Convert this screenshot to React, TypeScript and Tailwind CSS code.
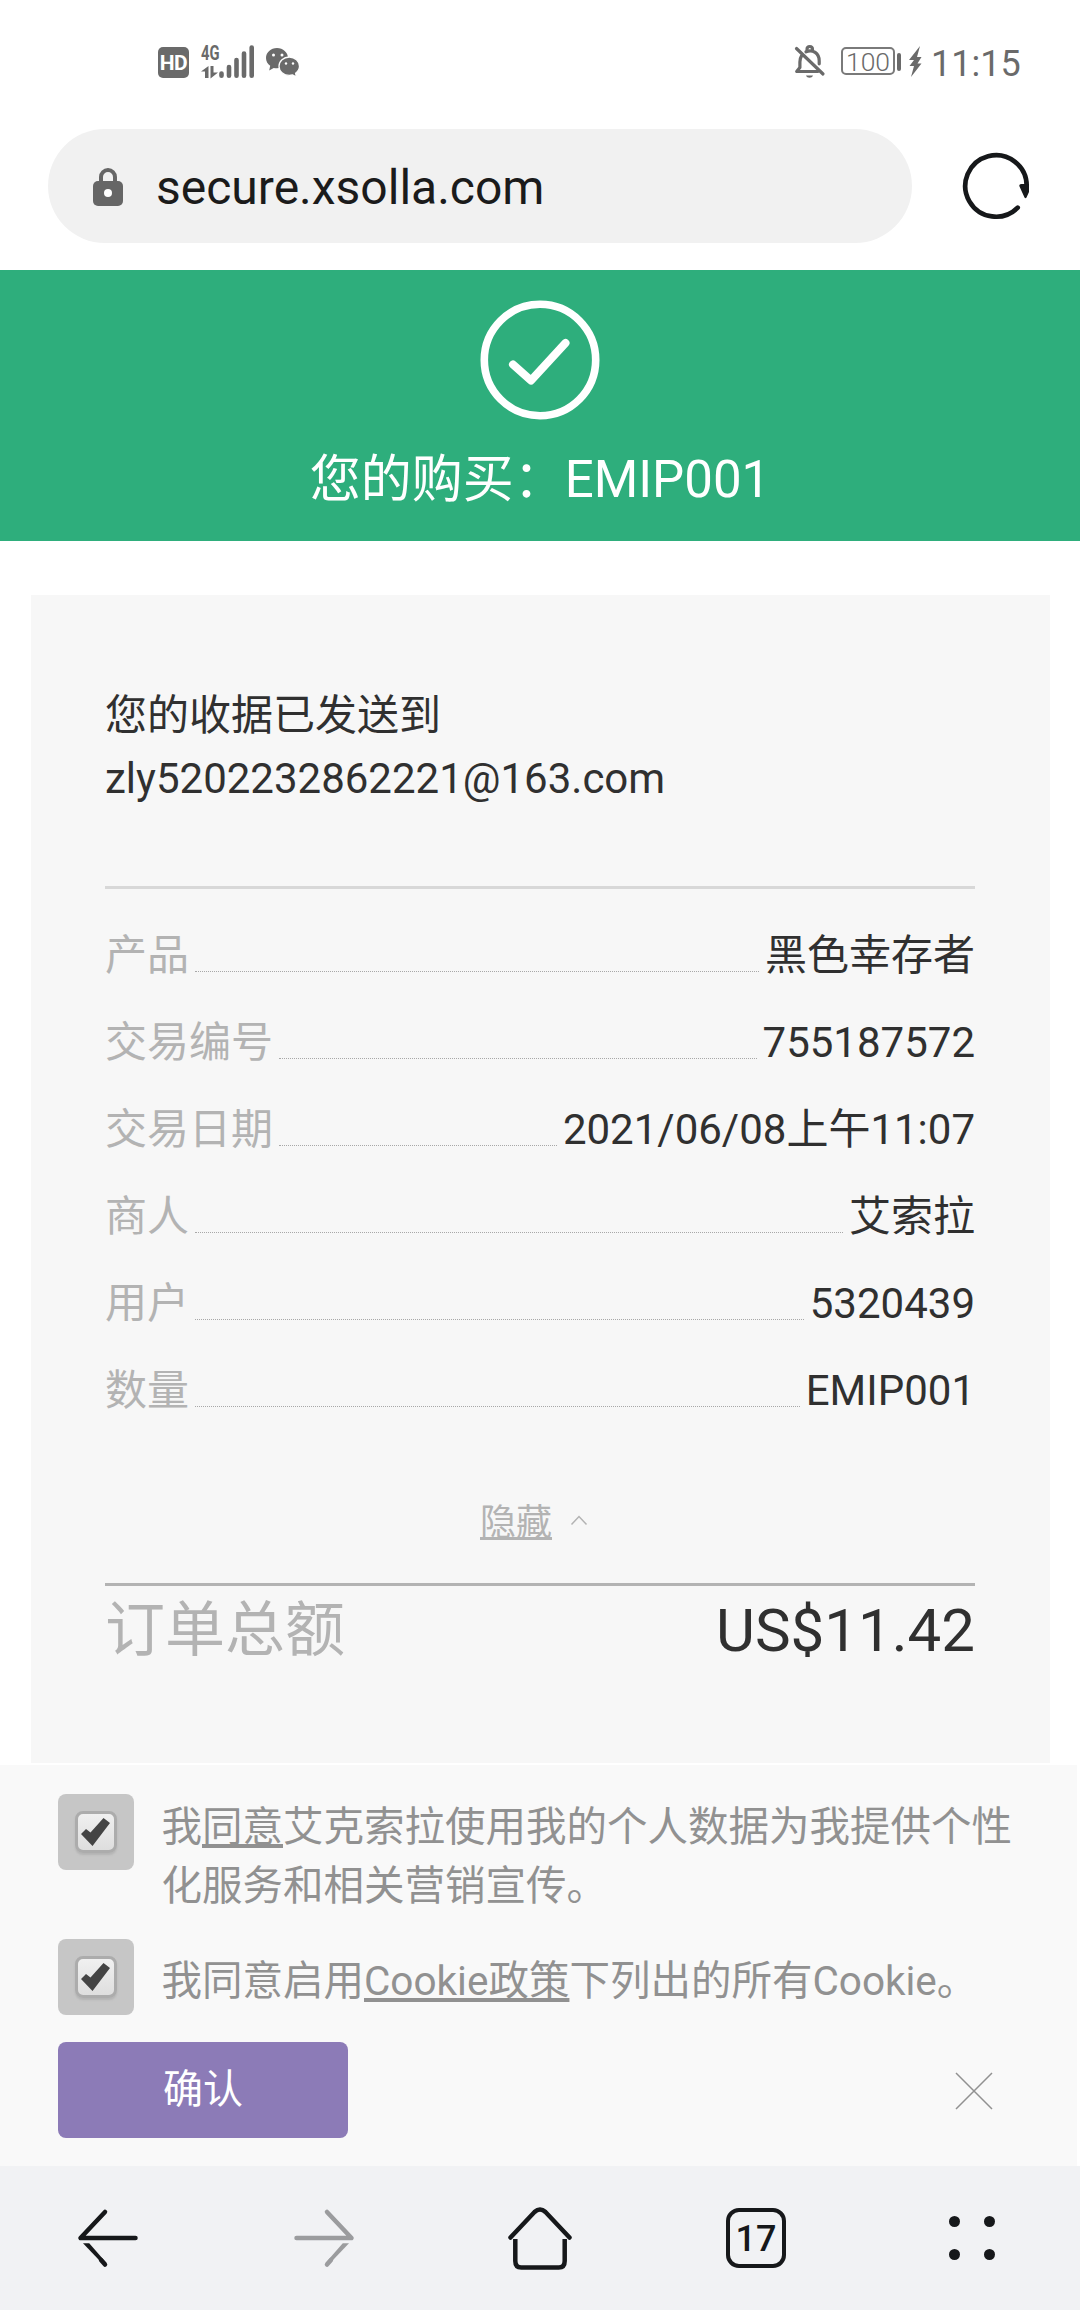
import React from 'react';

interface ReceiptRow {
  label: string;
  value: string;
}

const ROWS: ReceiptRow[] = [
  { label: '产品', value: '黑色幸存者' },
  { label: '交易编号', value: '755187572' },
  { label: '交易日期', value: '2021/06/08上午11:07' },
  { label: '商人', value: '艾索拉' },
  { label: '用户', value: '5320439' },
  { label: '数量', value: 'EMIP001' },
];

const StatusBar = () => (
  <div className="flex h-[129px] items-start justify-between pt-10 pl-[158px] pr-[59px] text-[#6a6a6a]">
    <div className="flex">
      <span className="mt-[7px] flex h-[31px] w-[31px] items-center justify-center rounded-[5px] bg-[#6a6a6a] pt-px text-[21px] font-bold leading-none tracking-[-0.5px] text-white">
        HD
      </span>
      <svg className="ml-[11px] h-10 w-[56px]" viewBox="0 0 56 40" fill="currentColor">
        <text x="1" y="20" fontSize="21" fontWeight="700" textLength="18.500" lengthAdjust="spacingAndGlyphs">4G</text>
        <path d="M8.500 26v12H5v-6.500H1z M10.500 26h3v6.500h4.500l-7.500 6z" />
        <g stroke="currentColor" strokeWidth="4.600" strokeLinecap="round">
          <path d="M21.500 33.500v2.300M29 27v8.800M36.500 20v15.800M44 13.500v22.300M51.700 7.500v28.300" />
        </g>
      </svg>
      <svg className="ml-[10px] h-10 w-[34px]" viewBox="0 0 34 40" fill="currentColor">
        <path d="M11 8C4.800 8 0 12.500 0 18c0 3.200 1.600 6 4.200 7.800L3.200 30.500l4.500-2.600c1.100.300 2.200.400 3.300.400 6 0 11-4.500 11-10.200S17 8 11 8z" />
        <path
          d="M23.300 17C17.500 17 13 21.100 13 26.200s4.500 9.200 10.300 9.200c1.200 0 2.300-.200 3.300-.500l3.900 2.200-.900-3.900c2.300-1.700 3.900-4.200 3.900-7 0-5.100-4.500-9.200-10.200-9.200z"
          stroke="white"
          strokeWidth="1.300"
        />
        <g fill="white">
          <circle cx="7.500" cy="15" r="1.500" />
          <circle cx="16" cy="15" r="1.500" />
          <circle cx="20" cy="23.500" r="1.200" />
          <circle cx="27" cy="23.500" r="1.200" />
        </g>
      </svg>
    </div>
    <div className="flex">
      <svg className="h-10 w-[32px]" viewBox="0 0 32 40" fill="none" stroke="currentColor" strokeWidth="3.200" strokeLinecap="round">
        <path d="M2.500 8.500L29 34" />
        <path d="M7.500 16c-1.200 1.800-1.600 3.800-1.600 6v5.500L2.700 31.500h21" strokeLinejoin="round" />
        <path d="M12 11.800c6.800-3 13.200 1.600 13.200 9v3" />
        <path d="M13 9.500c0-4 5.500-4 5.500 0" />
        <path d="M12 35.500h7c-1 3-6 3-7 0z" fill="currentColor" stroke="none" />
      </svg>
      <span className="ml-[15px] mt-[7px] flex h-[28px] w-[54px] items-center justify-center rounded-[5px] border-2 border-[#7a7a7a] pt-[2px] text-[26.500px] font-light leading-none">
        100
      </span>
      <span className="ml-[2px] mt-[13px] h-[18px] w-[4px] rounded-full bg-[#6a6a6a]" />
      <svg className="ml-[7px] h-10 w-[14px]" viewBox="0 0 14 40" fill="currentColor">
        <path d="M12 6L1 20h5l-4.500 6H6L3 37 13.500 23.500H9.500L13.500 17H9z" />
      </svg>
      <span className="ml-[9px] w-[90px] pt-px text-[36px] leading-[46px]">11:15</span>
    </div>
  </div>
);

const AddressBar = () => (
  <div className="flex h-[141px] items-start pl-12">
    <div className="flex h-[114px] w-[864px] items-center rounded-full bg-[#f1f1f1] pl-[45px]">
      <svg className="h-10 w-[30px]" viewBox="0 0 30 40">
        <path d="M8 18v-7a7 7 0 0 1 14 0v7" fill="none" stroke="#666" strokeWidth="4" />
        <rect y="15" width="30" height="25" rx="5" fill="#666" />
        <circle cx="15" cy="27" r="4" fill="white" />
      </svg>
      <span className="ml-[33px] pt-1 text-[48px] leading-[56px] text-[#1b1b1b]">secure.xsolla.com</span>
    </div>
    <svg className="ml-[48px] mt-[21px] h-[72px] w-[72px]" viewBox="0 0 72 72">
      <path d="M57.700 57.700A30.700 30.700 0 1 1 66.700 36" fill="none" stroke="#16181a" strokeWidth="4.700" strokeLinecap="round" />
      <path d="M59.500 36.500q-1-3 3-2.500h6.500v8l-2.500 5.500q-1 1.500-2 0z" fill="#16181a" />
    </svg>
  </div>
);

const SuccessBanner = () => (
  <div className="flex h-[271px] flex-col items-center bg-[#2eae7c] pt-[30px] text-white">
    <svg className="h-[120px] w-[120px]" viewBox="0 0 120 120" fill="none" stroke="currentColor">
      <circle cx="60" cy="60" r="55.700" strokeWidth="7.600" />
      <path d="M33 64.500l18 16L85.500 43" strokeWidth="8" strokeLinecap="round" strokeLinejoin="round" />
    </svg>
    <h1 className="mt-[22px] text-[51px] leading-[76px]">您的购买：EMIP001</h1>
  </div>
);

const Receipt = () => (
  <div className="ml-[31px] mr-[30px] mt-[54px] h-[1168px] bg-[#f7f7f7] pl-[74px] pr-[75px] pt-[89px] text-[42px] leading-[63px] text-[#303030]">
    <p>
      您的收据已发送到
      <br />
      zly5202232862221@163.com
    </p>
    <div className="mt-[76px] h-[3px] bg-[#d8d8d8]" />
    <div className="flex flex-col gap-6 pt-[35px]">
      {ROWS.map(row => (
        <div key={row.label} className="flex h-[63px]">
          <span className="text-[#b3b3b3]">{row.label}</span>
          <span className="mx-[6px] h-12 flex-1 border-b border-dotted border-[#a8a8a8]" />
          <span>{row.value}</span>
        </div>
      ))}
    </div>
    <div className="mt-[74px] flex h-[54px] pl-[375px] text-[36px] leading-[54px] text-[#b3b3b3]">
      <a className="underline decoration-3 underline-offset-2 [text-decoration-skip-ink:none]">隐藏</a>
      <svg className="ml-[18px] mt-[19px] h-[11px] w-[18px]" viewBox="0 0 18 11" fill="none" stroke="currentColor" strokeWidth="1.500">
        <path d="M1.500 9.500L9 1.500l7.500 8" />
      </svg>
    </div>
    <div className="mt-[33px] h-[3px] bg-[#b3b3b3]" />
    <div className="flex justify-between text-[60px] leading-[90px]">
      <span className="text-[#b3b3b3]">订单总额</span>
      <span>US$11.42</span>
    </div>
  </div>
);

const Checkbox = () => (
  <span className="flex h-[76px] w-[76px] shrink-0 justify-center rounded-[8px] bg-[#c6c6c6] pt-[17px]">
    <span className="flex h-[42px] w-[42px] items-center justify-center rounded-[8px] border-[3px] border-[#acacac] bg-linear-to-b from-[#f0f0f0] to-[#dedede] shadow-[0_2px_2px_#b4b4b4]">
      <svg className="h-[30px] w-[30px]" viewBox="0 0 30 30" fill="#444">
        <path d="M0 17l5-5 4.500 3.500L22.500 1l6.500 5L11.500 29z" />
      </svg>
    </span>
  </span>
);

const ConsentPanel = () => (
  <div className="mr-[3px] mt-[2px] h-[401px] bg-[#f9f9f9] pl-[58px] pt-[29px] text-[40.500px] leading-[59px] text-[#919191]">
    <label className="flex h-[145px] items-start">
      <Checkbox />
      <span className="ml-[27.500px] w-[870px] pt-1">
        我
        <a className="underline decoration-4 underline-offset-3 [text-decoration-skip-ink:none]">同意</a>
        艾克索拉使用我的个人数据为我提供个性化服务和相关营销宣传。
      </span>
    </label>
    <label className="flex h-[103px] items-start">
      <Checkbox />
      <span className="ml-[27.500px] pt-[13px]">
        我同意启用
        <a className="underline decoration-4 underline-offset-3 [text-decoration-skip-ink:none]">Cookie政策</a>
        下列出的所有Cookie。
      </span>
    </label>
    <div className="flex h-24 items-center justify-between pr-[84px]">
      <button className="h-24 w-[290px] rounded-[8px] bg-[#8c7bb7] text-[40px] leading-[94px] text-white">确认</button>
      <svg className="mt-[2px] h-[38px] w-[38px]" viewBox="0 0 38 38" stroke="#919191" strokeWidth="1.500">
        <path d="M1 1l36 36M37 1L1 37" />
      </svg>
    </div>
  </div>
);

const NavBar = () => (
  <div className="grid h-[144px] grid-cols-5 items-center justify-items-center bg-[#f1f2f4] text-[#16181a]">
    <svg className="h-16 w-16" viewBox="0 0 64 64" fill="none" stroke="currentColor" strokeWidth="4.500" strokeLinecap="round">
      <path d="M29 6L4.500 32h55" strokeLinejoin="round" />
      <path d="M7 37.200h6.200L30.500 57l-3 1.800z" fill="currentColor" stroke="none" />
      <path d="M25 54l4 4.500" />
    </svg>
    <svg className="h-16 w-16 text-[#9b9c9e]" viewBox="0 0 64 64" fill="none" stroke="currentColor" strokeWidth="4.500" strokeLinecap="round">
      <path d="M35 6l24.500 26h-55" strokeLinejoin="round" />
      <path d="M57 37.200h-6.200L33.500 57l3 1.800z" fill="currentColor" stroke="none" />
      <path d="M39 54l-4 4.500" />
    </svg>
    <svg className="h-16 w-16" viewBox="0 0 64 64" fill="none" stroke="currentColor" strokeWidth="4.500">
      <path d="M2.500 31.500L26.500 6q5.500-5 11 0l24 25.500" strokeLinecap="round" />
      <path d="M7.300 33v22q0 6.500 6 6.500h37.400q6 0 6-6.500V33" />
    </svg>
    <span className="flex h-[60px] w-[60px] items-center justify-center rounded-[13px] border-[4.500px] border-[#16181a] pt-px text-[36px] font-medium leading-none">
      17
    </span>
    <div className="grid grid-cols-2 gap-x-6 gap-y-[22px]">
      <span className="h-[11px] w-[11px] rounded-full bg-[#16181a]" />
      <span className="h-[11px] w-[11px] rounded-full bg-[#16181a]" />
      <span className="h-[11px] w-[11px] rounded-full bg-[#16181a]" />
      <span className="h-[11px] w-[11px] rounded-full bg-[#16181a]" />
    </div>
  </div>
);

export default function App() {
  return (
    <div className="h-[2310px] w-[1080px] overflow-hidden bg-white font-[Roboto,'Noto_Sans_CJK_SC',sans-serif]">
      <StatusBar />
      <AddressBar />
      <SuccessBanner />
      <Receipt />
      <ConsentPanel />
      <NavBar />
    </div>
  );
}
